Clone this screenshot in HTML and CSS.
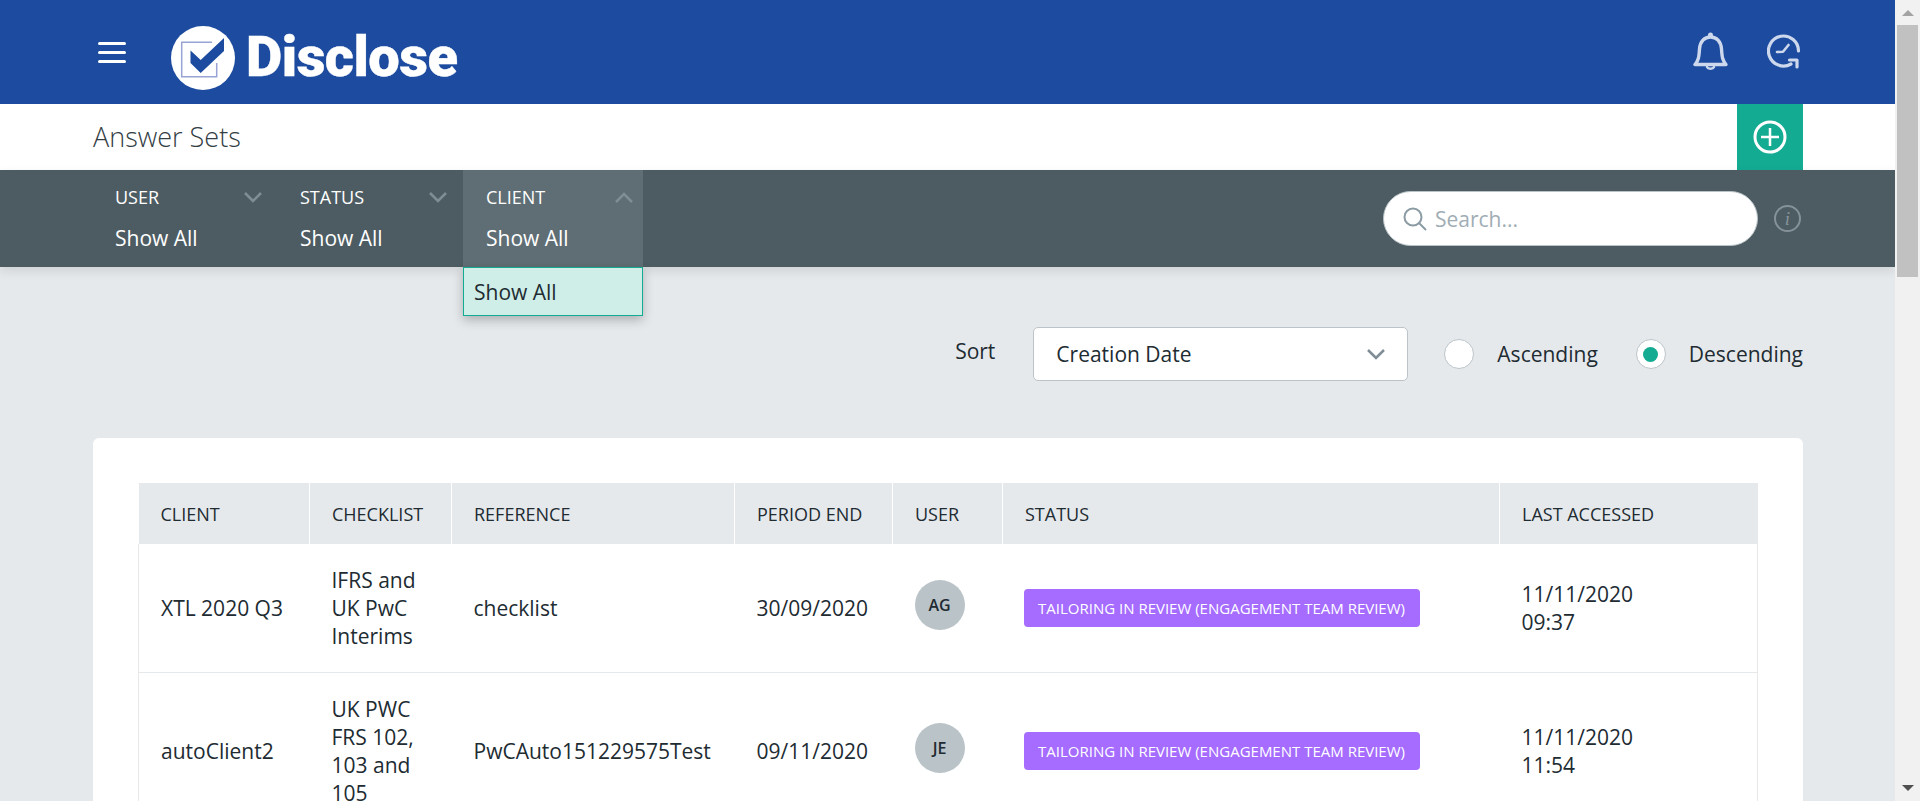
FILE: index.html
```html
<!DOCTYPE html>
<html lang="en">
<head>
    <meta charset="UTF-8">
    <title>Answer Sets</title>
    <link rel="stylesheet" href="styles.css">
</head>
<body>

<div class="page">
    <div class="main">
        <header class="topbar">
            <div class="brand">
                <div class="hamburger"><span></span><span></span><span></span></div>
                <svg class="logo-mark" width="64" height="64" viewBox="0 0 64 64">
                    <circle cx="32" cy="32" r="32" fill="#fff"/>
                    <path d="M41 16.300H10.700V50.700H45.700V37" fill="none" stroke="#9aa3d6" stroke-width="1.500"/>
                    <path d="M19.500 24.500L29.700 34L53 12V25L29.700 47L19.500 37Z" fill="#1c4b9f"/>
                </svg>
                <span class="logo-text">Disclose</span>
            </div>
            <div class="top-icons">
                <svg width="36" height="40" viewBox="0 0 36 40" fill="none" stroke="#cdd8ec" stroke-width="3.400" stroke-linejoin="round" stroke-linecap="round">
                    <path d="M2 32.500H33C29.500 28.500 29 25 28.500 17C28 9.500 23.500 5 17.500 5C11.500 5 7 9.500 6.500 17C6 25 5.500 28.500 2 32.500Z"/>
                    <circle cx="17.500" cy="3" r="1.500" fill="#cdd8ec" stroke-width="2"/>
                    <path d="M14 35C15 37.300 20 37.300 21 35" stroke-width="2.500"/>
                </svg>
                <svg width="34" height="36" viewBox="0 0 34 36" fill="none" stroke="#cdd8ec" stroke-width="3.200" stroke-linecap="round" stroke-linejoin="round">
                    <path d="M31.500 17A15 15 0 1 0 24 30"/>
                    <path d="M22.500 26H30V33"/>
                    <path d="M21.500 11L16 17.700L10 18" stroke-width="2.600"/>
                </svg>
            </div>
        </header>

        <div class="titlebar">
            <h1 class="page-title">Answer Sets</h1>
            <button class="add-btn">
                <svg width="34" height="34" viewBox="0 0 34 34" fill="none" stroke="#fff">
                    <circle cx="17" cy="17" r="15" stroke-width="3"/>
                    <path d="M17 8V26M8 17H26" stroke-width="2.500"/>
                </svg>
            </button>
        </div>

        <div class="filterbar">
            <div class="filters">
                <div class="filter">
                    <div class="filter-label">USER
                        <svg class="chev" width="18" height="11" viewBox="0 0 18 11"><path d="M1 1L9 9L17 1"/></svg>
                    </div>
                    <div class="filter-value">Show All</div>
                </div>
                <div class="filter">
                    <div class="filter-label">STATUS
                        <svg class="chev" width="18" height="11" viewBox="0 0 18 11"><path d="M1 1L9 9L17 1"/></svg>
                    </div>
                    <div class="filter-value">Show All</div>
                </div>
                <div class="filter filter-open">
                    <div class="filter-label">CLIENT
                        <svg class="chev" width="18" height="11" viewBox="0 0 18 11"><path d="M1 10L9 2L17 10"/></svg>
                    </div>
                    <div class="filter-value">Show All</div>
                    <div class="filter-menu">Show All</div>
                </div>
            </div>
            <div class="search-wrap">
                <div class="search">
                    <svg width="24" height="24" viewBox="0 0 24 24" fill="none" stroke="#8b9ba3" stroke-width="2">
                        <circle cx="10" cy="10" r="8.500"/>
                        <path d="M16 16L23 23"/>
                    </svg>
                    <span>Search...</span>
                </div>
                <div class="info"><i>i</i></div>
            </div>
        </div>

        <div class="content">
            <div class="sort-row">
                <span class="sort-label">Sort</span>
                <div class="select">
                    <span>Creation Date</span>
                    <svg class="select-chev" width="18" height="11" viewBox="0 0 18 11"><path d="M1 1L9 9L17 1"/></svg>
                </div>
                <div class="radio-item">
                    <span class="radio"></span>
                    <span>Ascending</span>
                </div>
                <div class="radio-item">
                    <span class="radio radio-on"></span>
                    <span>Descending</span>
                </div>
            </div>

            <div class="card">
                <table class="sets">
                    <colgroup>
                        <col class="c-client"><col class="c-checklist"><col class="c-ref"><col class="c-period"><col class="c-user"><col class="c-status"><col class="c-last">
                    </colgroup>
                    <thead>
                        <tr>
                            <th>CLIENT</th>
                            <th>CHECKLIST</th>
                            <th>REFERENCE</th>
                            <th>PERIOD END</th>
                            <th>USER</th>
                            <th>STATUS</th>
                            <th>LAST ACCESSED</th>
                        </tr>
                    </thead>
                    <tbody>
                        <tr>
                            <td>XTL 2020 Q3</td>
                            <td>IFRS and UK PwC Interims</td>
                            <td>checklist</td>
                            <td>30/09/2020</td>
                            <td><span class="avatar">AG</span></td>
                            <td><span class="badge">TAILORING IN REVIEW (ENGAGEMENT TEAM REVIEW)</span></td>
                            <td>11/11/2020<br>09:37</td>
                        </tr>
                        <tr>
                            <td>autoClient2</td>
                            <td>UK PWC FRS 102, 103 and 105</td>
                            <td>PwCAuto151229575Test</td>
                            <td>09/11/2020</td>
                            <td><span class="avatar">JE</span></td>
                            <td><span class="badge">TAILORING IN REVIEW (ENGAGEMENT TEAM REVIEW)</span></td>
                            <td>11/11/2020<br>11:54</td>
                        </tr>
                    </tbody>
                </table>
            </div>
        </div>
    </div>

    <div class="scrollbar">
        <div class="arrow-up"></div>
        <div class="thumb"></div>
        <div class="arrow-down"></div>
    </div>
</div>

</body>
</html>
```

FILE: styles.css
```css
html, body {
    height: 100%;
    margin: 0;
    overflow: hidden;
}

body {
    font-family: "Open Sans", Arial, sans-serif;
    font-size: 21px;
    color: #212b32;
    background-color: #e6e9ec;
}

.page {
    display: flex;
    height: 100vh;
    overflow: hidden;
}

.main {
    flex: 1;
    min-width: 0;
    overflow: hidden;
    box-shadow: 1px 0 5px rgba(0, 0, 0, 0.12);
}

/* top blue bar */
.topbar {
    display: flex;
    justify-content: space-between;
    align-items: center;
    height: 104px;
    padding: 0 94px 0 98px;
    background-color: #1c4b9f;
}

.brand {
    display: flex;
    align-items: center;
}

.hamburger {
    display: flex;
    flex-direction: column;
    gap: 6px;
    width: 28px;
    margin-right: 45px;
}

.hamburger span {
    display: block;
    height: 3px;
    border-radius: 2px;
    background-color: #fff;
}

.logo-mark {
    margin-top: 11px;
    margin-right: 11px;
}

.logo-text {
    margin-top: 9px;
    font-family: Roboto, Arial, sans-serif;
    font-size: 56px;
    font-weight: 900;
    letter-spacing: -0.5px;
    line-height: 64px;
    color: #fff;
    -webkit-text-stroke: 0.4px #fff;
}

.top-icons {
    display: flex;
    align-items: center;
    gap: 38px;
}

/* page title */
.titlebar {
    display: flex;
    justify-content: space-between;
    height: 66px;
    padding: 0 92px 0 93px;
    background-color: #fff;
}

.page-title {
    margin: 0;
    font-size: 27px;
    font-weight: 300;
    line-height: 66px;
    color: #333d44;
}

.add-btn {
    display: flex;
    align-items: center;
    justify-content: center;
    width: 66px;
    padding: 0;
    border: none;
    background-color: #14ab93;
}

/* filters */
.filterbar {
    position: relative;
    display: flex;
    justify-content: space-between;
    height: 97px;
    padding: 0 94px 0 93px;
    background-color: #4d5c62;
    box-shadow: 0 4px 10px rgba(0, 0, 0, 0.1);
}

.filters {
    display: flex;
}

.filter {
    position: relative;
    width: 185px;
    padding: 15px 0 0 22px;
    box-sizing: border-box;
    color: #fff;
}

.filter-label {
    display: flex;
    justify-content: space-between;
    align-items: center;
    height: 24px;
    padding-right: 16px;
    font-size: 18px;
}

.chev {
    fill: none;
    stroke: #7f8e95;
    stroke-width: 2.500;
}

.filter-value {
    margin-top: 11px;
    line-height: 36px;
}

.filter-open {
    width: 180px;
    padding-left: 23px;
    background-color: #5f6e74;
}

.filter-open .filter-label {
    padding-right: 10px;
}

.filter-menu {
    position: absolute;
    top: 100%;
    left: 0;
    right: 0;
    height: 49px;
    padding-left: 10px;
    box-sizing: border-box;
    border: 1px solid #14ab93;
    line-height: 49px;
    color: #212b32;
    background-color: #cfeee8;
    box-shadow: 0 4px 10px rgba(0, 0, 0, 0.25);
}

.search-wrap {
    display: flex;
    align-items: center;
    gap: 16px;
}

.search {
    display: flex;
    align-items: center;
    gap: 8px;
    width: 375px;
    height: 55px;
    padding-left: 19px;
    box-sizing: border-box;
    border-radius: 28px;
    border: 1px solid #b9c3c8;
    color: #9fadb5;
    background-color: #fff;
}

.info {
    width: 27px;
    height: 27px;
    box-sizing: border-box;
    border: 2px solid #859299;
    border-radius: 50%;
    text-align: center;
    font-family: "Liberation Serif", serif;
    font-size: 19px;
    line-height: 23px;
    color: #859299;
}

/* sort row */
.content {
    padding: 60px 92px 0 93px;
}

.sort-row {
    display: flex;
    justify-content: flex-end;
    align-items: center;
    height: 54px;
}

.sort-label {
    margin-right: 38px;
    margin-top: -6px;
}

.select {
    display: flex;
    justify-content: space-between;
    align-items: center;
    width: 375px;
    height: 54px;
    padding: 0 22px;
    box-sizing: border-box;
    border: 1px solid #bcc4c9;
    border-radius: 5px;
    background-color: #fff;
}

.select-chev {
    fill: none;
    stroke: #7f8e95;
    stroke-width: 2.500;
}

.radio-item {
    display: flex;
    align-items: center;
    gap: 23px;
    margin-left: 36px;
}

.radio-item + .radio-item {
    margin-left: 38px;
}

.radio {
    display: flex;
    align-items: center;
    justify-content: center;
    width: 30px;
    height: 30px;
    box-sizing: border-box;
    border: 1px solid #bcc4c9;
    border-radius: 50%;
    background-color: #fff;
}

.radio-on::after {
    content: "";
    width: 15px;
    height: 15px;
    border-radius: 50%;
    background-color: #14ab93;
}

/* table card */
.card {
    margin-top: 57px;
    padding: 45px 46px 45px 45px;
    border-radius: 6px;
    background-color: #fff;
}

.sets {
    width: 1619px;
    table-layout: fixed;
    border-collapse: collapse;
}

.c-client { width: 171px; }
.c-checklist { width: 142px; }
.c-ref { width: 283px; }
.c-period { width: 158px; }
.c-user { width: 110px; }
.c-status { width: 497px; }
.c-last { width: 258px; }

.sets th {
    height: 61px;
    padding: 0 22px;
    box-sizing: border-box;
    border-left: 1px solid #fff;
    text-align: left;
    font-size: 18px;
    font-weight: 400;
    background-color: #e6e9ec;
}

.sets th:first-child {
    border-left: none;
}

.sets td {
    padding: 22px 22px;
    line-height: 28px;
    border-bottom: 1px solid #e6e9ec;
}

.sets td:first-child {
    border-left: 1px solid #e6e9ec;
}

.sets td:last-child {
    border-right: 1px solid #e6e9ec;
}

.avatar {
    display: block;
    width: 50px;
    height: 50px;
    margin-top: -6px;
    border-radius: 50%;
    text-align: center;
    font-size: 16px;
    font-weight: 600;
    line-height: 50px;
    background-color: #bac3c8;
}

.badge {
    display: block;
    width: 396px;
    height: 38px;
    margin-left: -1px;
    border-radius: 4px;
    text-align: center;
    font-size: 15px;
    line-height: 38px;
    white-space: nowrap;
    color: #fff;
    background-color: #a56cff;
}

/* the drawn scrollbar */
.scrollbar {
    position: relative;
    flex: none;
    width: 25px;
    background-color: #f1f1f1;
}

.thumb {
    position: absolute;
    top: 25px;
    left: 2px;
    width: 21px;
    height: 252px;
    background-color: #c1c1c1;
}

.arrow-up {
    position: absolute;
    top: 10px;
    left: 7px;
    border-left: 6px solid transparent;
    border-right: 6px solid transparent;
    border-bottom: 6px solid #a3a3a3;
}

.arrow-down {
    position: absolute;
    bottom: 10px;
    left: 7px;
    border-left: 6px solid transparent;
    border-right: 6px solid transparent;
    border-top: 6px solid #505050;
}
```
